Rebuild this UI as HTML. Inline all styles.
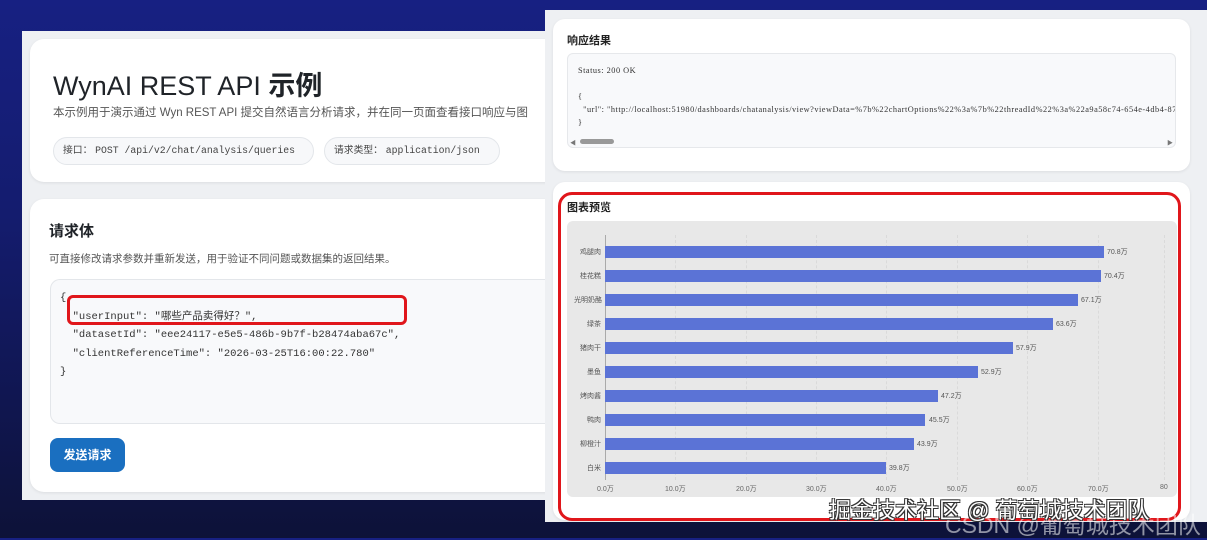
<!DOCTYPE html>
<html><head><meta charset="utf-8"><style>
*{margin:0;padding:0;box-sizing:border-box}
body{width:1207px;height:538px;overflow:hidden;position:relative;font-family:"Liberation Sans","Noto Sans CJK SC",sans-serif;background:linear-gradient(180deg,#172082 0%,#141c6e 40%,#101650 75%,#0d1238 100%)}
.lp{position:absolute;left:22px;top:31px;width:530px;height:469px;background:#eef0f3}
.card{position:absolute;background:#fff;border-radius:12px;box-shadow:0 1px 3px rgba(0,0,0,.08)}
.mono{font-family:"Liberation Mono","Noto Sans CJK SC",monospace}
.pill{position:absolute;height:28px;border:1px solid #e3e6ea;border-radius:14px;background:#f7f8fa;font-size:9.8px;color:#444;line-height:26px;padding:0 9px;white-space:nowrap}
.rp{position:absolute;left:545px;top:10px;width:662px;height:512px;background:#eef0f3}
.bar{position:absolute;left:605px;height:12px;background:#5b73d6}
.lab{position:absolute;font-size:7px;color:#555}
.ax{position:absolute;top:484px;font-size:7px;color:#666}
.grid{position:absolute;top:235px;height:245px;border-left:1px dashed #dadada}
</style></head><body>
<div class="lp">
  <div class="card" style="left:8px;top:8px;width:520px;height:143px;border-radius:14px 0 0 14px"></div>
  <div style="position:absolute;left:31px;top:33px;font-size:27px;color:#1f2328">WynAI REST API <b>示例</b></div>
  <div style="position:absolute;left:31px;top:73px;font-size:11.5px;color:#555;white-space:nowrap">本示例用于演示通过 Wyn REST API 提交自然语言分析请求，并在同一页面查看接口响应与图</div>
  <div class="pill" style="left:31px;top:106px;width:261px">接口： <span class="mono">POST /api/v2/chat/analysis/queries</span></div>
  <div class="pill" style="left:302px;top:106px;width:176px">请求类型： <span class="mono">application/json</span></div>
  <div class="card" style="left:8px;top:168px;width:520px;height:293px;border-radius:14px 0 0 14px"></div>
  <div style="position:absolute;left:27px;top:189px;font-size:15px;font-weight:bold;color:#1f2328">请求体</div>
  <div style="position:absolute;left:27px;top:220px;font-size:10.5px;color:#555">可直接修改请求参数并重新发送，用于验证不同问题或数据集的返回结果。</div>
  <div style="position:absolute;left:28px;top:248px;width:502px;height:145px;border:1px solid #e3e6ea;border-right:none;border-radius:10px 0 0 10px;background:#f8f9fb"></div>
  <div class="mono" style="position:absolute;left:38px;top:258px;font-size:10.5px;line-height:18.5px;color:#333;white-space:pre">{
  "userInput": "哪些产品卖得好？",
  "datasetId": "eee24117-e5e5-486b-9b7f-b28474aba67c",
  "clientReferenceTime": "2026-03-25T16:00:22.780"
}</div>
  <div style="position:absolute;left:45px;top:264px;width:340px;height:30px;border:3px solid #e0161b;border-radius:6px"></div>
  <div style="position:absolute;left:28px;top:407px;width:75px;height:34px;background:#1a6fc0;border-radius:8px;color:#fff;font-size:12px;font-weight:bold;text-align:center;line-height:34px">发送请求</div>
</div>
<div class="rp">
  <div class="card" style="left:8px;top:9px;width:637px;height:152px"></div>
  <div style="position:absolute;left:22px;top:22px;font-size:11px;font-weight:bold;color:#222">响应结果</div>
  <div style="position:absolute;left:22px;top:43px;width:609px;height:95px;border:1px solid #e6e8eb;border-radius:6px;background:#f8f9fb;overflow:hidden">
    <div style="font-family:'Liberation Serif',serif;font-size:8.3px;letter-spacing:0.5px;color:#333;white-space:pre;line-height:13px;position:absolute;left:10px;top:10px">Status: 200 OK

{
  "url": "http://localhost:51980/dashboards/chatanalysis/view?viewData=%7b%22chartOptions%22%3a%7b%22threadId%22%3a%22a9a58c74-654e-4db4-87
}</div>
    <div style="position:absolute;left:2px;top:84px;font-size:6px;color:#777">◀</div>
    <div style="position:absolute;right:2px;top:84px;font-size:6px;color:#777">▶</div>
    <div style="position:absolute;left:12px;top:85px;width:34px;height:5px;background:#999;border-radius:3px"></div>
  </div>
  <div class="card" style="left:8px;top:172px;width:637px;height:338px"></div>
  <div style="position:absolute;left:22px;top:189px;font-size:11px;font-weight:bold;color:#222">图表预览</div>
  <div style="position:absolute;left:22px;top:211px;width:610px;height:276px;background:#e8e8e8;border-radius:6px"></div>
  <div style="position:absolute;left:13px;top:182px;width:623px;height:329px;border:3px solid #e0161b;border-radius:14px"></div>
</div>
<div class="grid" style="left:675px"></div><div class="grid" style="left:746px"></div><div class="grid" style="left:816px"></div><div class="grid" style="left:886px"></div><div class="grid" style="left:957px"></div><div class="grid" style="left:1027px"></div><div class="grid" style="left:1098px"></div><div class="grid" style="left:1164px"></div>
<div style="position:absolute;left:605px;top:235px;height:245px;border-left:1px solid #aaa"></div>
<div class="bar" style="top:246px;width:499px"></div><div class="lab" style="left:1107px;top:247px">70.8万</div>
<div class="bar" style="top:270px;width:496px"></div><div class="lab" style="left:1104px;top:271px">70.4万</div>
<div class="bar" style="top:294px;width:473px"></div><div class="lab" style="left:1081px;top:295px">67.1万</div>
<div class="bar" style="top:318px;width:448px"></div><div class="lab" style="left:1056px;top:319px">63.6万</div>
<div class="bar" style="top:342px;width:408px"></div><div class="lab" style="left:1016px;top:343px">57.9万</div>
<div class="bar" style="top:366px;width:373px"></div><div class="lab" style="left:981px;top:367px">52.9万</div>
<div class="bar" style="top:390px;width:333px"></div><div class="lab" style="left:941px;top:391px">47.2万</div>
<div class="bar" style="top:414px;width:320px"></div><div class="lab" style="left:929px;top:415px">45.5万</div>
<div class="bar" style="top:438px;width:309px"></div><div class="lab" style="left:917px;top:439px">43.9万</div>
<div class="bar" style="top:462px;width:281px"></div><div class="lab" style="left:889px;top:463px">39.8万</div>
<div class="lab" style="left:580px;top:247px">鸡腿肉</div>
<div class="lab" style="left:580px;top:271px">桂花糕</div>
<div class="lab" style="left:574px;top:295px">光明奶酪</div>
<div class="lab" style="left:587px;top:319px">绿茶</div>
<div class="lab" style="left:580px;top:343px">猪肉干</div>
<div class="lab" style="left:587px;top:367px">墨鱼</div>
<div class="lab" style="left:580px;top:391px">烤肉酱</div>
<div class="lab" style="left:587px;top:415px">鸭肉</div>
<div class="lab" style="left:580px;top:439px">柳橙汁</div>
<div class="lab" style="left:587px;top:463px">白米</div>
<div class="ax" style="left:597px">0.0万</div><div class="ax" style="left:665px">10.0万</div><div class="ax" style="left:736px">20.0万</div><div class="ax" style="left:806px">30.0万</div><div class="ax" style="left:876px">40.0万</div><div class="ax" style="left:947px">50.0万</div><div class="ax" style="left:1017px">60.0万</div><div class="ax" style="left:1088px">70.0万</div><div class="ax" style="left:1160px">80</div>
<div style="position:absolute;left:945px;top:506px;font-size:23px;color:rgba(255,255,255,.55);white-space:nowrap">CSDN @葡萄城技术团队</div>
<div style="position:absolute;left:829px;top:493px;font-size:22px;color:#fff;white-space:nowrap;text-shadow:-1px -1px 0 #333,1px -1px 0 #333,-1px 1px 0 #333,1px 1px 0 #333">掘金技术社区 @ 葡萄城技术团队</div>
</body></html>
